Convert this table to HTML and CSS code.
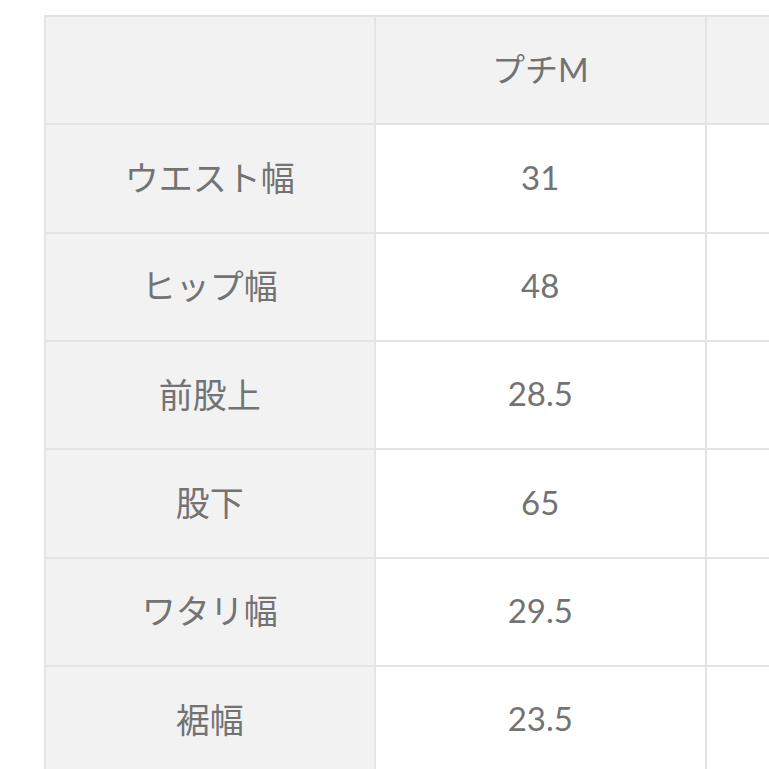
FILE: index.html
```html
<!DOCTYPE html>
<html lang="ja">
<head>
<meta charset="utf-8">
<link rel="stylesheet" href="styles.css">
</head>
<body>
<div class="size-table">
  <div class="cell head"></div>
  <div class="cell head">プチM</div>
  <div class="cell head"></div>

  <div class="cell label">ウエスト幅</div>
  <div class="cell value">31</div>
  <div class="cell value"></div>

  <div class="cell label">ヒップ幅</div>
  <div class="cell value">48</div>
  <div class="cell value"></div>

  <div class="cell label">前股上</div>
  <div class="cell value">28.5</div>
  <div class="cell value"></div>

  <div class="cell label">股下</div>
  <div class="cell value">65</div>
  <div class="cell value"></div>

  <div class="cell label">ワタリ幅</div>
  <div class="cell value">29.5</div>
  <div class="cell value"></div>

  <div class="cell label">裾幅</div>
  <div class="cell value">23.5</div>
  <div class="cell value"></div>
</div>
</body>
</html>
```
FILE: styles.css
```css
html, body {
  margin: 0;
  padding: 0;
  overflow: hidden;
  background: #ffffff;
}

body {
  font-family: "Lato", "Noto Sans CJK JP", sans-serif;
  color: #737373;
}

.size-table {
  display: inline-grid;
  grid-template-columns: 328.5px 328.5px 328.5px;
  grid-auto-rows: 106.35px;
  gap: 2px;
  padding: 2px;
  margin: 15px 0 0 43.5px;
  background: #e4e4e4;
}

.cell {
  display: flex;
  align-items: center;
  justify-content: center;
  padding-bottom: 4px;
  box-sizing: border-box;
  font-size: 33px;
  background: #ffffff;
}

.label {
  font-size: 34px;
}

.head,
.label {
  background: #f2f2f2;
}
```
